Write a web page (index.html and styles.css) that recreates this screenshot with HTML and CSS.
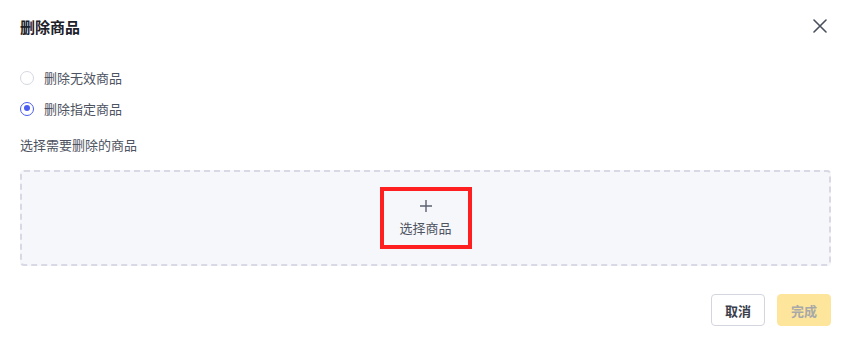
FILE: index.html
```html
<!DOCTYPE html>
<html lang="zh-CN">
<head>
    <meta charset="UTF-8">
    <meta name="viewport" content="width=device-width, initial-scale=1.0">
    <title>删除商品</title>
    <link rel="stylesheet" href="styles.css">
</head>
<body>
    <div class="dialog">
        <div class="dialog-header">
            <div class="dialog-title">删除商品</div>
            <button class="close" aria-label="关闭">
                <svg width="14" height="14" viewBox="0 0 14 14">
                    <path d="M1 1L13 13M13 1L1 13" stroke="#4a4f5c" stroke-width="1.6" stroke-linecap="round"/>
                </svg>
            </button>
        </div>
        <div class="radio-group">
            <label class="radio"><span class="radio-dot"></span>删除无效商品</label>
            <label class="radio checked"><span class="radio-dot"></span>删除指定商品</label>
        </div>
        <div class="field-label">选择需要删除的商品</div>
        <div class="upload-box">
            <div class="pick">
                <svg class="plus" width="12" height="12" viewBox="0 0 12 12">
                    <path d="M6 0V12M0 6H12" stroke="#5c6070" stroke-width="1.4"/>
                </svg>
                <span>选择商品</span>
            </div>
        </div>
        <div class="dialog-footer">
            <button class="btn">取消</button>
            <button class="btn btn-primary" disabled>完成</button>
        </div>
    </div>
</body>
</html>
```

FILE: styles.css
```css
body {
    margin: 0;
    background: #fff;
    font-family: "Noto Sans CJK SC", "Noto Sans", sans-serif;
    color: #4e5361;
}
.dialog {
    padding: 0 21px 0 20px;
}
.dialog-header {
    height: 52px;
    display: flex;
    align-items: center;
    justify-content: space-between;
}
.dialog-title {
    font-size: 15px;
    font-weight: 700;
    color: #1d2129;
}
.close {
    border: 0;
    background: none;
    padding: 0;
    margin-right: 4px;
    width: 14px;
    height: 14px;
    display: flex;
}
.radio-group {
    margin-top: 10px;
}
.radio {
    height: 31px;
    display: flex;
    align-items: center;
    font-size: 13px;
    color: #4e5361;
}
.radio-dot {
    width: 14px;
    height: 14px;
    box-sizing: border-box;
    border: 1px solid #d6d8e2;
    border-radius: 50%;
    margin-right: 10px;
    position: relative;
}
.radio.checked .radio-dot {
    border: 1.5px solid #4b5cf0;
}
.radio.checked .radio-dot::after {
    content: "";
    position: absolute;
    left: 2.5px;
    top: 2.5px;
    width: 6px;
    height: 6px;
    border-radius: 50%;
    background: #4b5cf0;
}
.field-label {
    margin-top: 11px;
    font-size: 13px;
    line-height: 20px;
}
.upload-box {
    margin-top: 15px;
    height: 96px;
    box-sizing: border-box;
    border: 2px dashed #d8d9e4;
    border-radius: 4px;
    background: #f6f7fb;
    display: flex;
    align-items: center;
    justify-content: center;
}
.pick {
    width: 92px;
    height: 62px;
    box-sizing: border-box;
    border: 4px solid #fe2020;
    display: flex;
    flex-direction: column;
    align-items: center;
    justify-content: center;
    font-size: 13px;
    color: #4e5361;
    line-height: 18px;
}
.plus {
    margin-bottom: 7px;
}
.dialog-footer {
    margin-top: 28px;
    display: flex;
    justify-content: flex-end;
    gap: 12px;
}
.btn {
    height: 32px;
    padding: 0 13px;
    font-family: inherit;
    font-size: 13px;
    font-weight: 700;
    color: #3a3e4a;
    background: #fff;
    border: 1px solid #d3d5df;
    border-radius: 4px;
}
.btn-primary {
    background: #fde59c;
    border-color: #fde59c;
    color: #a8a8a8;
}
```
